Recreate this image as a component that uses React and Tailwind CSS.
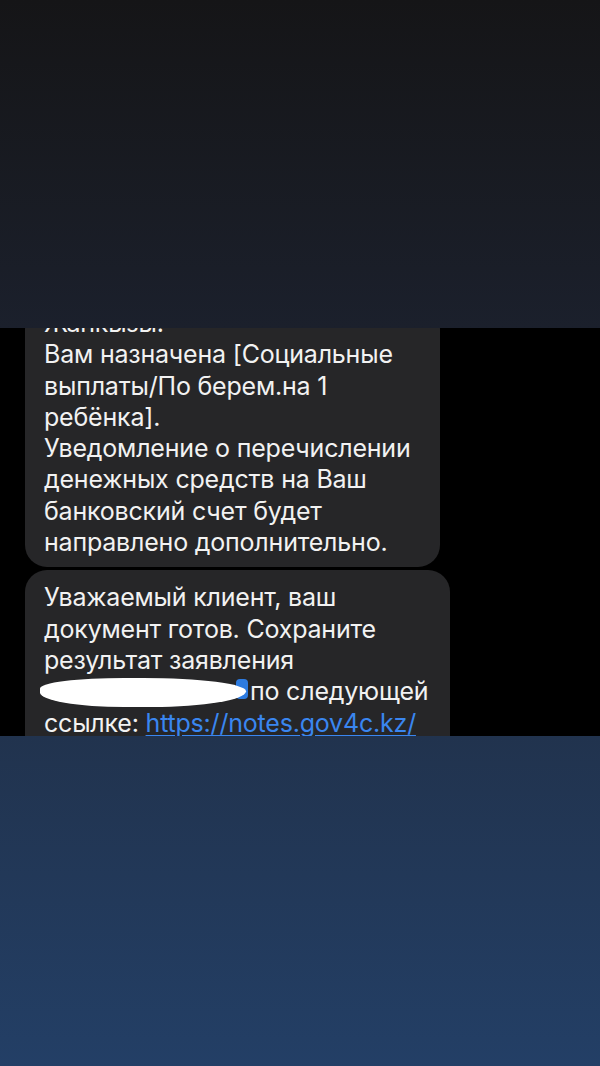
import React from "react";

const Bubble = ({ width, className = "", children }) => (
  <div
    className={`bg-[#262628] rounded-[22px] pl-[19px] pr-3 text-[25px] leading-[31.3px] tracking-[-0.2px] text-[#f2f2f2] ${width} ${className}`}
  >
    {children}
  </div>
);

export default function App() {
  return (
    <div
      className="w-[600px] h-[1066px] flex flex-col bg-black overflow-hidden"
      style={{ fontFamily: "Inter, 'Noto Sans', sans-serif" }}
    >
      {/* top blurred area */}
      <div className="h-[328px] shrink-0 bg-gradient-to-b from-[#151517] to-[#1b202c]" />

      {/* message area */}
      <div className="h-[408px] shrink-0 overflow-hidden">
        <div className="flex flex-col gap-[3px] pl-[25px] -mt-[20px]">
          <Bubble width="w-[415px]" className="pt-0 pb-[9px]">
            <div>Жанкызы!</div>
            <div>Вам назначена [Социальные выплаты/По берем.на 1 ребёнка].</div>
            <div>
              Уведомление о перечислении денежных средств на Ваш банковский
              счет будет направлено дополнительно.
            </div>
          </Bubble>
          <Bubble width="w-[425px]" className="pt-[12px] pb-[9px]">
            <div>Уважаемый клиент, ваш документ готов. Сохраните результат заявления</div>
            <div className="flex items-center">
              <span className="relative w-[206px] h-[31px] shrink-0">
                <span className="absolute right-[2px] top-[3px] w-[12px] h-[20px] bg-[#2d7be0] rounded-sm" />
                <span className="absolute left-[-4px] top-[2px] w-[206px] h-[29px] bg-white rounded-[45%_55%_50%_45%/40%_50%_60%_55%]" />
              </span>
              <span>по следующей</span>
            </div>
            <div>
              ссылке:{" "}
              <span className="text-[#3a86f0] underline underline-offset-[3px] decoration-[1.5px]">
                https://notes.gov4c.kz/
              </span>
            </div>
            <div>&nbsp;</div>
          </Bubble>
        </div>
      </div>

      {/* bottom blurred area */}
      <div className="flex-1 bg-gradient-to-b from-[#21334e] to-[#233f66]" />
    </div>
  );
}
